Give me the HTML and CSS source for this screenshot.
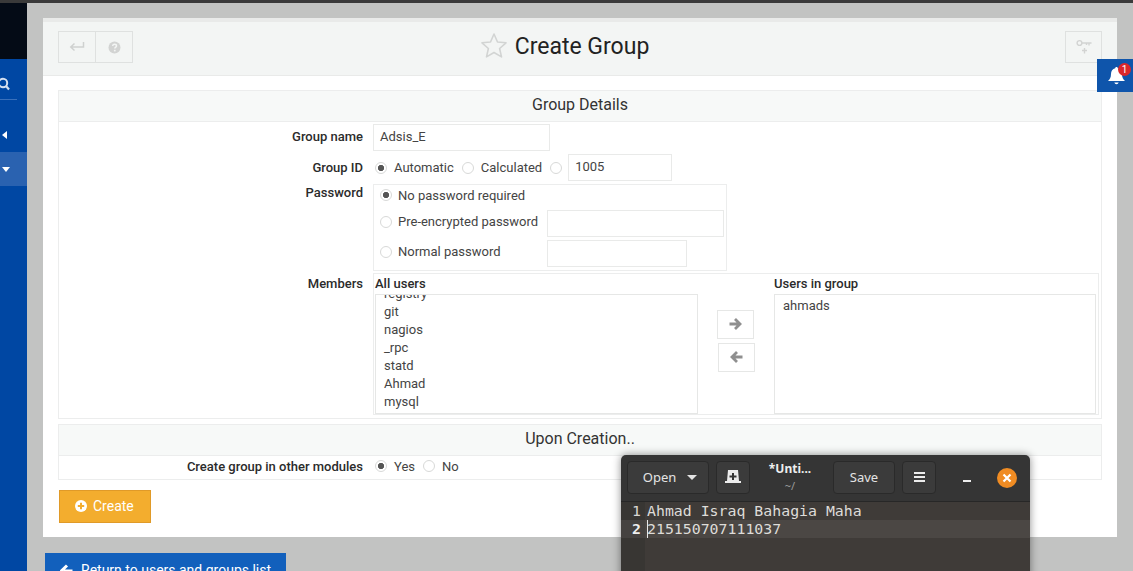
FILE: index.html
```html
<!DOCTYPE html>
<html lang="en">
<head>
<meta charset="utf-8">
<title>Create Group</title>
<link rel="stylesheet" href="styles.css">
</head>
<body>
<div class="topstrip"></div>
<div class="app">
  <aside class="sidebar">
    <div class="brand"></div>
    <div class="search">
      <svg class="search-icon" width="17" height="17" viewBox="0 0 17 17"><circle cx="4" cy="7" r="4.2" fill="none" stroke="#d5e0f0" stroke-width="2"/><path d="M7 10l3 3.4" stroke="#d5e0f0" stroke-width="2.2" fill="none"/></svg>
    </div>
    <div class="nav-item"><svg width="6" height="8" viewBox="0 0 6 8"><path d="M5 0v8L0 4z" fill="#fff"/></svg></div>
    <div class="nav-item active"><svg width="8" height="5" viewBox="0 0 8 5"><path d="M0 0h8L4 5z" fill="#fff"/></svg></div>
  </aside>
  <main class="content">
    <section class="panel">
      <header class="panel-head">
        <div class="btn-group">
          <span class="head-btn"><svg width="16" height="12" viewBox="0 0 16 12"><path d="M14.500 1v5H2M5.500 2.500 1.800 6l3.700 3.500" fill="none" stroke="#cfd1d0" stroke-width="1.500"/></svg></span>
          <span class="head-btn"><svg width="13" height="13" viewBox="0 0 13 13"><circle cx="6.500" cy="6.500" r="6" fill="#d2d3d2"/><path d="M4.600 5c.2-1.200 1-1.700 2-1.700 1.100 0 1.900.7 1.900 1.600 0 1.300-1.700 1.300-1.700 2.700" fill="none" stroke="#f3f5f4" stroke-width="1.500"/><rect x="5.900" y="8.800" width="1.700" height="1.600" fill="#f3f5f4"/></svg></span>
        </div>
        <h1 class="title">
          <svg class="star" width="28" height="26" viewBox="0 0 28 26"><path d="M14 2l3.500 8 8.500.8-6.400 5.700 1.900 8.400L14 20.500l-7.500 4.400 1.900-8.400L2 10.800l8.500-.8z" fill="none" stroke="#d2d4d3" stroke-width="1.600" stroke-linejoin="round"/></svg>
          <span>Create Group</span>
        </h1>
        <span class="head-btn key-btn"><svg width="16" height="17" viewBox="0 0 16 17"><circle cx="3.500" cy="4" r="2.400" fill="none" stroke="#d2d3d2" stroke-width="1.400"/><path d="M6 4h9.500M13 4v2.500M10.500 4v2" stroke="#d2d3d2" stroke-width="1.400" fill="none"/><path d="M6 11.500h5M8.500 9v5.500" stroke="#d2d3d2" stroke-width="1.400" fill="none"/></svg></span>
      </header>

      <div class="panel-body">
        <section class="box">
          <h2 class="box-title">Group Details</h2>
          <div class="form">
            <div class="row">
              <label class="label lbl-mid lbl-name">Group name</label>
              <div><span class="field w-name">Adsis_E</span></div>
            </div>
            <div class="row">
              <label class="label lbl-mid">Group ID</label>
              <div class="inline">
                <span class="radio on"></span><span class="opt">Automatic</span>
                <span class="radio"></span><span class="opt">Calculated</span>
                <span class="radio"></span>
                <span class="field w-id">1005</span>
              </div>
            </div>
            <div class="row row-pw">
              <label class="label lbl-top">Password</label>
              <div class="pw-box">
                <div class="pw-row pw-first"><span class="radio on"></span><span class="opt">No password required</span></div>
                <div class="pw-row"><span class="pw-opt"><span class="radio"></span><span class="opt">Pre-encrypted password</span></span><span class="field w-pw1"></span></div>
                <div class="pw-row"><span class="pw-opt"><span class="radio"></span><span class="opt">Normal password</span></span><span class="field w-pw2"></span></div>
              </div>
            </div>
            <div class="row">
              <label class="label lbl-top lbl-members">Members</label>
              <div class="members">
                <div class="col-all">
                  <div class="list-title">All users</div>
                  <div class="list list-all">
                    <div class="list-scroll">
                      <div>registry</div><div>git</div><div>nagios</div><div>_rpc</div><div>statd</div><div>Ahmad</div><div>mysql</div>
                    </div>
                  </div>
                </div>
                <div class="arrows">
                  <span class="arrow-btn"><svg width="13" height="12" viewBox="0 0 13 12"><path d="M.5 6h10M6 1 11 6l-5 5" fill="none" stroke="#8f8f8f" stroke-width="2.800"/></svg></span>
                  <span class="arrow-btn second"><svg width="13" height="12" viewBox="0 0 13 12"><path d="M12.500 6H2.500M7 1 2 6l5 5" fill="none" stroke="#8f8f8f" stroke-width="2.800"/></svg></span>
                </div>
                <div class="col-group">
                  <div class="list-title">Users in group</div>
                  <div class="list list-group"><div class="list-scroll plain"><div>ahmads</div></div></div>
                </div>
              </div>
            </div>
          </div>
        </section>

        <section class="box box-two">
          <h2 class="box-title">Upon Creation..</h2>
          <div class="row row-last">
            <label class="label lbl-mid">Create group in other modules</label>
            <div class="inline inline-last">
              <span class="radio on"></span><span class="opt">Yes</span>
              <span class="radio"></span><span class="opt">No</span>
            </div>
          </div>
        </section>

        <button class="create" type="button">
          <svg width="12" height="12" viewBox="0 0 12 12"><circle cx="6" cy="6" r="6" fill="#fff"/><path d="M6 2.800v6.400M2.800 6h6.400" stroke="#f3ad2e" stroke-width="2"/></svg>
          Create
        </button>
      </div>
    </section>

    <button class="return" type="button">
      <svg width="13" height="12" viewBox="0 0 13 12"><path d="M12.500 7H4M7 1.500 1.800 6.500 7 11.500" fill="none" stroke="#fff" stroke-width="3"/></svg>
      Return to users and groups list
    </button>
  </main>
</div>

<div class="bell">
  <svg width="19" height="20" viewBox="0 0 18 20"><path d="M9 1c-.8 0-1.300.6-1.300 1.300C5 3 3.500 5.200 3.500 8c0 3.800-1.300 5.500-3 7h17c-1.700-1.500-3-3.200-3-7 0-2.800-1.500-5-4.200-5.700C10.300 1.600 9.800 1 9 1zM6.800 16.500a2.300 2.300 0 0 0 4.400 0z" fill="#fff"/></svg>
  <span class="badge">1</span>
</div>

<div class="editor">
  <div class="ed-bar">
    <span class="ed-btn ed-open">Open<svg width="10" height="5" viewBox="0 0 10 5"><path d="M0 0h10L5 5z" fill="#e4e4e4"/></svg></span>
    <span class="ed-btn ed-new"><svg width="16" height="14" viewBox="0 0 16 14"><path d="M3 0h10l1 11h2v2H0v-2h2z" fill="#ececec"/><path d="M8 3v7M4.500 6.500h7" stroke="#353535" stroke-width="2"/></svg></span>
    <div class="ed-title"><strong>*Unti...</strong><small>~/</small></div>
    <span class="ed-btn ed-save">Save</span>
    <span class="ed-btn ed-menu"><svg width="11" height="10" viewBox="0 0 11 10"><path d="M0 1h11M0 5h11M0 9h11" stroke="#ececec" stroke-width="2"/></svg></span>
    <span class="ed-min"></span>
    <span class="ed-close"><svg width="10" height="10" viewBox="0 0 10 10"><path d="M1.500 1.500l7 7M8.500 1.500l-7 7" stroke="#fff" stroke-width="2.200"/></svg></span>
  </div>
  <div class="ed-text">
    <div class="ed-line"><span class="ed-num">1</span><span class="ed-code">Ahmad Israq Bahagia Maha</span></div>
    <div class="ed-line current"><span class="ed-num">2</span><span class="ed-code caret">215150707111037</span></div>
    <div class="ed-rest"><span class="ed-num"></span></div>
  </div>
</div>
</body>
</html>
```
FILE: styles.css
```css
* { box-sizing: border-box; }
html, body { margin: 0; padding: 0; height: 571px; overflow: hidden; }
body { background: #c2c3c2; font-family: Roboto, "Liberation Sans", sans-serif; font-size: 13px; color: #333; position: relative; }

.topstrip { height: 3px; background: #3a3a3a; }
.app { display: flex; height: 568px; }

.sidebar { width: 27px; flex: none; background: #0047a3; overflow: hidden; }
.brand { height: 56px; background: #040b16; }
.search { height: 41px; margin-right: 10px; border-bottom: 1px solid #3a70bb; padding-top: 17px; }
.search-icon { display: block; margin-left: -1px; }
.nav-item { height: 34px; display: flex; align-items: center; padding-left: 2px; }
.search + .nav-item { margin-top: 18px; }
.nav-item.active { background: #2a62b0; }

.content { flex: 1; min-width: 0; padding: 15px 16px 0 16px; }
.panel { background: #fff; height: 519px; border-top: 4px solid #e9eae9; }
.panel-head { height: 54px; background: #f3f5f4; border-bottom: 1px solid #e9eae9; display: grid; grid-template-columns: 1fr auto 1fr; align-items: start; padding: 9px 15px 0; }
.btn-group { display: flex; }
.head-btn { width: 38px; height: 32px; border: 1px solid #dfe1e0; display: flex; align-items: center; justify-content: center; }
.btn-group .head-btn + .head-btn { margin-left: -1px; }
.key-btn { width: 37px; justify-self: end; }
.title { margin: 0 32px 0 0; display: flex; align-items: center; gap: 7px; font-weight: 400; font-size: 23px; line-height: 32px; color: #222; }
.star { margin: -5px 0 0 1px; }

.panel-body { padding: 14px 15px 0; }
.box { border: 1px solid #eceded; height: 329px; }
.box-two { height: 56px; margin-top: 5px; }
.box-title { margin: 0; height: 31px; line-height: 28px; background: #f7f9f8; border-bottom: 1px solid #eceded; text-align: center; font-weight: 400; font-size: 16px; color: #333; }

.form { padding-top: 2px; }
.row { display: grid; grid-template-columns: 304px 1fr; column-gap: 10px; margin-bottom: 3px; }
.row-pw { margin-bottom: 2px; }
.row-last { margin-bottom: 0; }
.label { font-weight: 500; text-align: right; color: #2b2b2b; }
.lbl-mid { align-self: center; }
.lbl-name { padding-bottom: 2px; }
.lbl-top { padding-top: 1px; }
.lbl-members { padding-top: 3px; }

.field { display: flex; align-items: center; height: 27px; padding: 0 6px 2px; border: 1px solid #e9eae9; background: #fff; color: #444; font-size: 13px; }
.w-name { width: 177px; }
.w-id { width: 104px; margin-left: -1px; padding-bottom: 3px; }
.w-pw1 { width: 177px; }
.w-pw2 { width: 140px; }

.inline { display: flex; align-items: center; height: 27px; padding-left: 2px; }
.inline-last { height: 20px; }
.radio { flex: none; width: 12px; height: 12px; border: 1px solid #d8d9d8; border-radius: 50%; background: #fff; position: relative; margin-right: 7px; }
.radio.on { background: radial-gradient(circle, #555 0, #555 2.800px, #fff 3.500px); }
.opt { color: #444; margin-right: 8px; }

.pw-box { width: 354px; height: 87px; border: 1px solid #eceded; padding: 0 0 0 6px; }
.pw-row { display: flex; align-items: center; height: 30px; }
.pw-first { height: 20px; margin-bottom: 3px; }
.pw-first .opt { margin-left: -1px; }
.pw-opt { width: 167px; display: flex; align-items: center; padding-bottom: 3px; }
.pw-opt .opt { margin: 0 0 0 -1px; white-space: nowrap; }

.members { height: 142px; width: 726px; border: 1px solid #eceded; display: grid; grid-template-columns: 323px 1fr 322px; padding: 0 2px 0 1px; }
.list-title { height: 20px; line-height: 19px; font-weight: 500; color: #2b2b2b; }
.list { height: 120px; border: 1px solid #e6e7e6; overflow: hidden; }
.list-scroll { margin-top: -10px; padding-left: 8px; line-height: 18px; color: #444; }
.list-scroll.plain { margin-top: 2px; }
.arrows { display: flex; flex-direction: column; padding: 36px 0 0 19px; }
.arrow-btn { width: 37px; height: 29px; border: 1px solid #e6e7e6; display: flex; align-items: center; justify-content: center; padding-bottom: 2px; }
.arrow-btn.second { margin: 4px 0 0 1px; }

.create { display: flex; align-items: center; gap: 6px; margin: 10px 0 0 1px; width: 92px; height: 33px; padding: 0 0 2px 15px; background: #f3ad2e; border: 1px solid #e09a28; color: #fff; font: 400 14px Roboto, "Liberation Sans", sans-serif; }
.return { display: flex; align-items: center; gap: 8px; height: 40px; width: 241px; margin: 16px 0 0 2px; padding: 0 0 7px 15px; border: 0; background: #1260bc; color: #fff; font: 400 14px Roboto, "Liberation Sans", sans-serif; white-space: nowrap; }

.bell { position: absolute; left: 1097px; top: 59px; width: 36px; height: 33px; background: #0f55ab; display: flex; align-items: center; justify-content: center; padding: 0 0 0 2px; }
.badge { position: absolute; left: 21px; top: 4px; width: 13px; height: 13px; border-radius: 50%; background: #d9262a; color: #fff; font-size: 10px; line-height: 13px; text-align: center; }

.editor { position: absolute; left: 621px; top: 455px; width: 409px; height: 130px; border-radius: 5px 5px 0 0; background: #353535; box-shadow: 0 0 8px rgba(0,0,0,.45); font-family: "Noto Sans", "Open Sans", sans-serif; color: #e4e4e4; overflow: hidden; }
.ed-bar { height: 47px; position: relative; border-bottom: 1px solid #272727; display: flex; align-items: flex-start; padding: 6px 0 0 6px; }
.ed-btn { height: 33px; display: flex; align-items: center; justify-content: center; background: #3b3b3b; border: 1px solid #2a2a2a; border-radius: 4px; font-size: 13px; padding-bottom: 1px; }
.ed-open { width: 82px; gap: 11px; padding-left: 4px; }
.ed-new { width: 34px; margin-left: 7px; }
.ed-title { width: 83px; text-align: center; line-height: 14px; padding: 1px 3px 0 0; }
.ed-title strong { display: block; font-size: 12px; font-weight: 700; color: #eee; padding-bottom: 3px; }
.ed-title small { display: block; font-size: 11px; color: #9a9a9a; }
.ed-save { width: 62px; }
.ed-menu { width: 34px; margin-left: 7px; }
.ed-min { width: 8px; height: 2px; background: #eee; margin: 19px 0 0 27px; }
.ed-close { width: 20px; height: 20px; border-radius: 50%; background: #f08c23; display: flex; align-items: center; justify-content: center; margin: 7px 0 0 26px; padding: 0; }

.ed-text { background: #3f3b38; height: 83px; font-family: "DejaVu Sans Mono", monospace; font-size: 14.87px; line-height: 19px; color: #dedcd8; }
.ed-line { display: flex; height: 18px; }
.ed-line.current { background: #4b4744; }
.ed-num { width: 24px; padding-right: 4px; flex: none; text-align: right; background: #383633; color: #d8d6d2; }
.current .ed-num { font-weight: 700; background: #454240; color: #eee; }
.ed-code { padding-left: 2px; white-space: pre; }
.caret { box-shadow: inset 1px 0 0 #e8e8e8; margin-left: 2px; padding-left: 0; }
.ed-rest { height: 50px; display: flex; }
.ed-rest .ed-num { height: 100%; }
```
